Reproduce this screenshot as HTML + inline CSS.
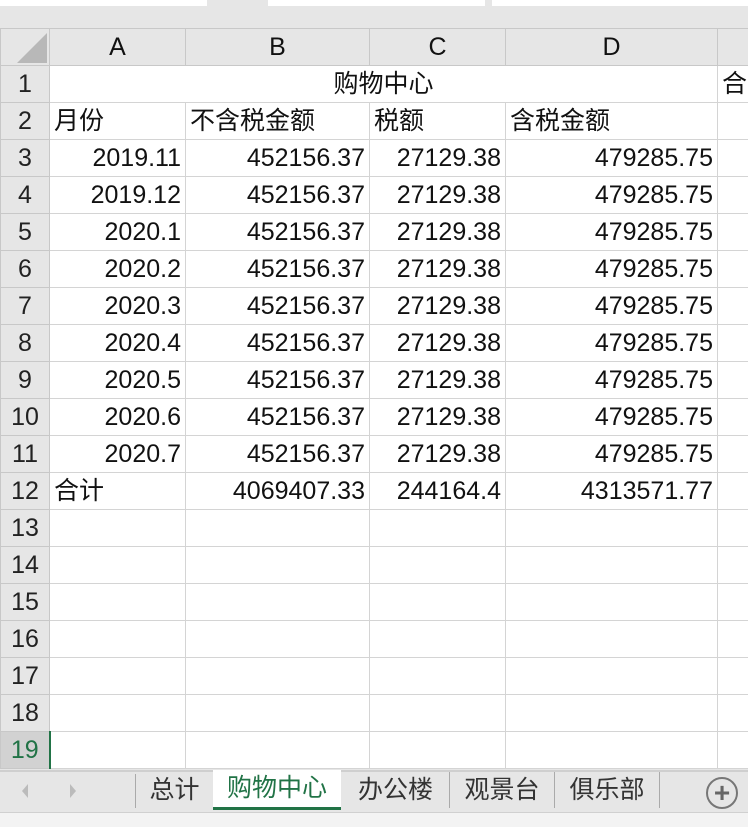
<!DOCTYPE html><html><head><style>
body{margin:0;width:748px;height:826px;overflow:hidden;background:#e6e6e6;font-family:"Liberation Sans","Noto Sans CJK SC",sans-serif;position:relative}
.a{position:absolute}
table{position:absolute;left:0;top:28px;border-collapse:collapse;table-layout:fixed;font-size:25px;width:800px}
td{height:36px;border:1px solid #d4d4d4;padding:0 4px;white-space:nowrap;overflow:hidden;background:#fff;color:#111;line-height:36px}
td.h{background:#e6e6e6;text-align:center;color:#222;border-color:#c8c8c8}
tr.hd td{height:35px;background:#e6e6e6;text-align:center;border-color:#c8c8c8}
.r{text-align:right}
.tab{position:absolute;top:772px;height:36px;line-height:36px;font-size:25px;color:#333;text-align:center;border-right:1px solid #aaa}
</style></head><body>
<div class="a" style="left:0;top:0;width:207px;height:6px;background:#fff"></div>
<div class="a" style="left:268px;top:0;width:217px;height:6px;background:#fff"></div>
<div class="a" style="left:492px;top:0;width:256px;height:6px;background:#fff"></div>
<table>
<colgroup><col style="width:49px"><col style="width:136px"><col style="width:184px"><col style="width:136px"><col style="width:212px"><col style="width:83px"></colgroup>
<tr class="hd"><td style="position:relative"><div class="a" style="right:2px;bottom:2px;width:0;height:0;border-left:30px solid transparent;border-bottom:30px solid #b8b8b8"></div></td><td>A</td><td>B</td><td>C</td><td>D</td><td></td></tr>
<tr><td class="h">1</td><td colspan="4" style="text-align:center">购物中心</td><td>合</td></tr>
<tr><td class="h">2</td><td>月份</td><td>不含税金额</td><td>税额</td><td>含税金额</td><td></td></tr>
<tr><td class="h">3</td><td class="r">2019.11</td><td class="r">452156.37</td><td class="r">27129.38</td><td class="r">479285.75</td><td></td></tr>
<tr><td class="h">4</td><td class="r">2019.12</td><td class="r">452156.37</td><td class="r">27129.38</td><td class="r">479285.75</td><td></td></tr>
<tr><td class="h">5</td><td class="r">2020.1</td><td class="r">452156.37</td><td class="r">27129.38</td><td class="r">479285.75</td><td></td></tr>
<tr><td class="h">6</td><td class="r">2020.2</td><td class="r">452156.37</td><td class="r">27129.38</td><td class="r">479285.75</td><td></td></tr>
<tr><td class="h">7</td><td class="r">2020.3</td><td class="r">452156.37</td><td class="r">27129.38</td><td class="r">479285.75</td><td></td></tr>
<tr><td class="h">8</td><td class="r">2020.4</td><td class="r">452156.37</td><td class="r">27129.38</td><td class="r">479285.75</td><td></td></tr>
<tr><td class="h">9</td><td class="r">2020.5</td><td class="r">452156.37</td><td class="r">27129.38</td><td class="r">479285.75</td><td></td></tr>
<tr><td class="h">10</td><td class="r">2020.6</td><td class="r">452156.37</td><td class="r">27129.38</td><td class="r">479285.75</td><td></td></tr>
<tr><td class="h">11</td><td class="r">2020.7</td><td class="r">452156.37</td><td class="r">27129.38</td><td class="r">479285.75</td><td></td></tr>
<tr><td class="h">12</td><td>合计</td><td class="r">4069407.33</td><td class="r">244164.4</td><td class="r">4313571.77</td><td></td></tr>
<tr><td class="h">13</td><td></td><td></td><td></td><td></td><td></td></tr>
<tr><td class="h">14</td><td></td><td></td><td></td><td></td><td></td></tr>
<tr><td class="h">15</td><td></td><td></td><td></td><td></td><td></td></tr>
<tr><td class="h">16</td><td></td><td></td><td></td><td></td><td></td></tr>
<tr><td class="h">17</td><td></td><td></td><td></td><td></td><td></td></tr>
<tr><td class="h">18</td><td></td><td></td><td></td><td></td><td></td></tr>
<tr><td class="h" style="background:#d2d2d2;color:#217346;border-right:2px solid #217346">19</td><td></td><td></td><td></td><td></td><td></td></tr>
</table>
<div class="a" style="left:0;top:770px;width:748px;height:2px;background:#cfcfcf"></div>
<div class="a" style="left:22px;top:784px;width:0;height:0;border-top:7px solid transparent;border-bottom:7px solid transparent;border-right:6px solid #bbb"></div>
<div class="a" style="left:70px;top:784px;width:0;height:0;border-top:7px solid transparent;border-bottom:7px solid transparent;border-left:6px solid #bbb"></div>
<div class="a" style="left:135px;top:774px;width:1px;height:34px;background:#aaa"></div>
<div class="tab" style="left:136px;width:77px">总计</div>
<div class="tab" style="left:213px;width:128px;top:770px;height:37px;background:#fff;color:#217346;border-bottom:3px solid #217346;border-right:none">购物中心</div>
<div class="tab" style="left:342px;width:107px">办公楼</div>
<div class="tab" style="left:450px;width:104px">观景台</div>
<div class="tab" style="left:555px;width:104px">俱乐部</div>
<div class="a" style="left:706px;top:777px;width:28px;height:28px;border:2px solid #777;border-radius:50%;text-align:center;line-height:28px;font-size:28px;color:#666;font-weight:bold">+</div>
<div class="a" style="left:0;top:812px;width:748px;height:14px;background:#f3f3f3;border-top:1px solid #d0d0d0"></div>
</body></html>
